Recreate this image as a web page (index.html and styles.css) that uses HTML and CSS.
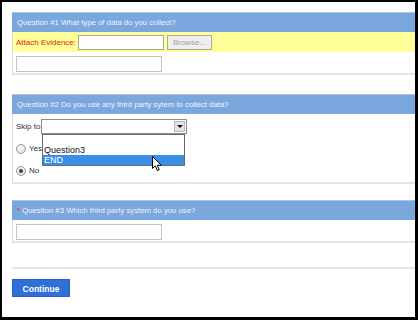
FILE: index.html
```html
<!DOCTYPE html>
<html>
<head>
<meta charset="utf-8">
<link rel="stylesheet" href="styles.css">
</head>
<body>
<div class="frame">
  <div class="page">
    <section class="question q1">
      <div class="qhead">Question #1 What type of data do you collect?</div>
      <div class="evidence">
        <span class="ev-label">Attach Evidence:</span>
        <span class="file-input"></span>
        <span class="browse">Browse...</span>
      </div>
      <div class="qbody">
        <span class="text-input"></span>
      </div>
    </section>

    <section class="question q2">
      <div class="qhead">Question #2 Do you use any third party sytem to collect data?</div>
      <div class="qbody q2body">
        <div class="skip">
          <span class="skip-label">Skip to</span>
          <span class="select">
            <span class="sel-arrow"><span class="tri"></span></span>
            <span class="dropdown">
              <span class="opt"></span>
              <span class="opt">Question3</span>
              <span class="opt sel">END</span>
            </span>
            <svg class="cursor" width="11" height="16" viewBox="0 0 11 16">
              <path d="M0.5 0.5 L0.5 12.5 L3.3 9.8 L5.3 14.6 L7.2 13.8 L5.3 9.2 L9.2 9.2 Z" fill="#fff" stroke="#000" stroke-width="1" stroke-linejoin="round"/>
            </svg>
          </span>
        </div>
        <div class="radio-row"><span class="radio"></span><span class="rlabel">Yes</span></div>
        <div class="radio-row"><span class="radio checked"></span><span class="rlabel">No</span></div>
      </div>
    </section>

    <section class="question q3">
      <div class="qhead"><span class="req">*</span> Question #3 Which third party system do you use?</div>
      <div class="qbody">
        <span class="text-input"></span>
      </div>
    </section>

    <div class="separator"></div>
    <div class="actions">
      <span class="continue">Continue</span>
    </div>
  </div>
</div>
</body>
</html>
```

FILE: styles.css
```css
html, body {
  margin: 0;
  padding: 0;
  background: #000;
}
.frame {
  width: 413px;
  height: 315px;
  border-style: solid;
  border-color: #000;
  border-width: 2px 3px 3px 2px;
  background: #fff;
  overflow: hidden;
}
.page {
  padding: 10px 0 0 10px;
  font-family: "Liberation Sans", Arial, sans-serif;
  font-size: 8px;
  color: #333;
}
.question {
  border-left: 1px solid #dcdcdc;
  border-bottom: 2px solid #e4e4e4;
}
.qhead {
  height: 19px;
  line-height: 19px;
  background: #7ba7df;
  border-top: 1px solid #a9c3e3;
  margin-left: -1px;
  padding-left: 5px;
  color: #eef4fc;
  font-size: 7.75px;
}
.req { color: #e0231a; }
.evidence {
  height: 20px;
  background: #ffff99;
  display: flex;
  align-items: center;
  padding-left: 3px;
}
.ev-label {
  color: #e0231a;
  margin-right: 2px;
}
.file-input {
  width: 84px;
  height: 13px;
  border: 1px solid #a8a88a;
  background: #fff;
}
.browse {
  width: 43px;
  height: 13px;
  margin-left: 3px;
  border: 1px solid #a9a9a0;
  background: #efefef;
  color: #a0a0a0;
  line-height: 13px;
  text-align: center;
}
.qbody {
  padding: 4px 0 1px 3px;
}
.text-input {
  display: block;
  width: 144px;
  height: 14px;
  border: 1px solid #c4c4c4;
  background: #fff;
}
.q2 { margin-top: 19px; }
.q2body {
  padding: 5px 0 6px 3px;
}
.skip {
  display: flex;
  align-items: center;
  height: 15px;
}
.skip-label { width: 25px; }
.select {
  position: relative;
  width: 144px;
  height: 13px;
  border: 1px solid #8c8c8c;
  background: #fff;
}
.sel-arrow {
  position: absolute;
  right: 1px;
  top: 1px;
  width: 11px;
  height: 11px;
  background: #e4e4e4;
  border: 1px solid #b8b8b8;
  box-sizing: border-box;
  display: flex;
  align-items: center;
  justify-content: center;
}
.tri {
  width: 0;
  height: 0;
  border-left: 3px solid transparent;
  border-right: 3px solid transparent;
  border-top: 3px solid #111;
}
.dropdown {
  position: absolute;
  left: 0;
  top: 14px;
  width: 141px;
  border: 1px solid #6a6a6a;
  background: #fff;
  display: flex;
  flex-direction: column;
  z-index: 2;
}
.opt {
  height: 10px;
  line-height: 10px;
  font-size: 9px;
  padding-left: 1px;
  color: #111;
}
.opt.sel {
  background: #3a8fe8;
  color: #fff;
}
.cursor {
  position: absolute;
  left: 110px;
  top: 36px;
  z-index: 3;
}
.radio-row {
  display: flex;
  align-items: center;
  height: 11px;
  margin-top: 9px;
}
.radio-row + .radio-row { margin-top: 11px; }
.radio-row:nth-child(2) { margin-top: 9px; }
.radio {
  width: 8px;
  height: 8px;
  border-radius: 50%;
  border: 1px solid #9a9a9a;
  background: radial-gradient(circle at 40% 35%, #fff 0, #e0e0e0 70%);
  margin-right: 3px;
  position: relative;
}
.radio.checked::after {
  content: "";
  position: absolute;
  left: 2px;
  top: 2px;
  width: 4px;
  height: 4px;
  border-radius: 50%;
  background: #2a3f6a;
}
.rlabel { font-size: 8px; }
.q3 { margin-top: 16px; }
.q3 .qbody { padding-bottom: 1px; }
.separator {
  margin-top: 24px;
  border-top: 2px solid #e4e4e4;
}
.actions {
  padding-top: 10px;
}
.continue {
  display: inline-block;
  width: 58px;
  height: 18px;
  line-height: 18px;
  text-align: center;
  background: #2f6fd6;
  border: 1px solid #2860c4;
  box-sizing: border-box;
  color: #fff;
  font-weight: bold;
  font-size: 8.5px;
}
```
